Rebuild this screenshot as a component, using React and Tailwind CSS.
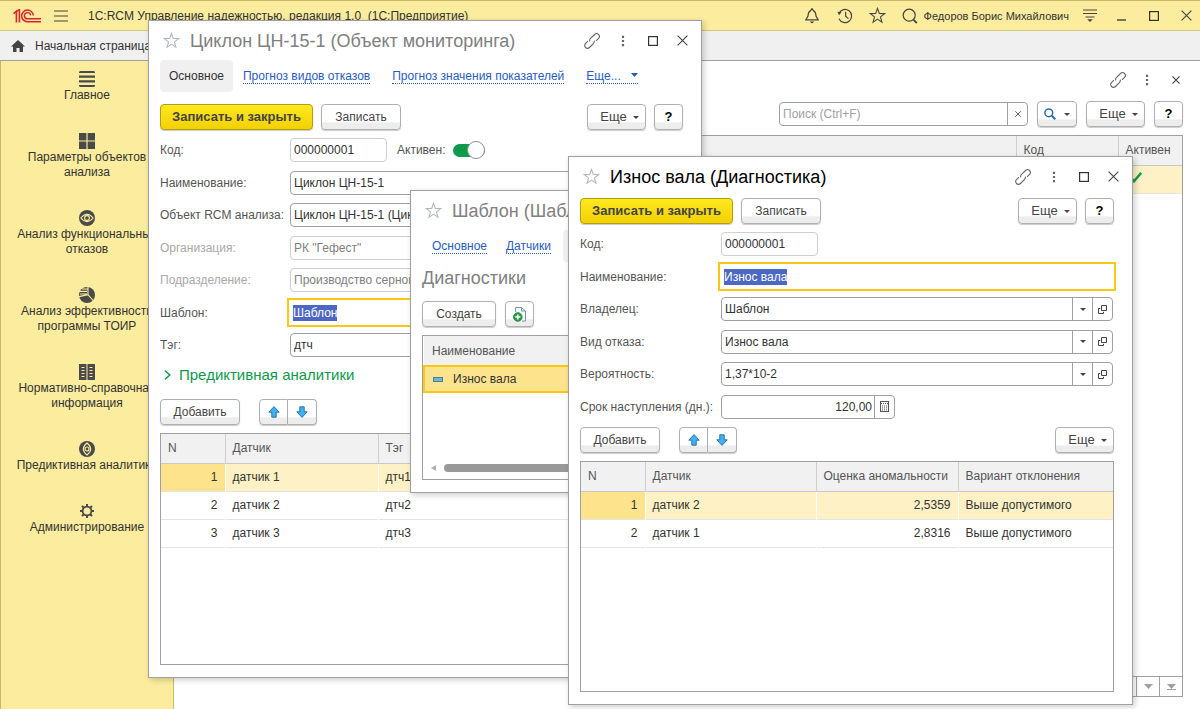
import React from 'react'
import clsx from 'clsx'

const sections = [
  { label: 'Главное', icon: 'lines' },
  { label: 'Параметры объектов анализа', icon: 'grid' },
  { label: 'Анализ функциональных отказов', icon: 'eye' },
  { label: 'Анализ эффективности программы ТОИР', icon: 'pie' },
  { label: 'Нормативно-справочная информация', icon: 'book' },
  { label: 'Предиктивная аналитика', icon: 'target' },
  { label: 'Администрирование', icon: 'gear' },
]

const sensors = [
  ['1', 'датчик 1', 'дтч1'],
  ['2', 'датчик 2', 'дтч2'],
  ['3', 'датчик 3', 'дтч3'],
]

const deviations = [
  ['1', 'датчик 2', '2,5359', 'Выше допустимого'],
  ['2', 'датчик 1', '2,8316', 'Выше допустимого'],
]

/* ---------- icons ---------- */

function Logo() {
  return (
    <svg width="28" height="14" viewBox="0 0 28 14" fill="none" stroke="#d9232e">
      <path d="M0.6 4.6L3.4 2.2V13.6M3.4 2.2L6.4 0.8V13.6" strokeWidth="1.6" />
      <path d="M20.3 6.4A5.8 5.8 0 1 0 14.6 12.7H28" strokeWidth="1.5" />
      <path d="M17.6 6.4A3.1 3.1 0 1 0 14.6 9.8H28" strokeWidth="1.4" />
    </svg>
  )
}

function SectionIcon({ name }) {
  return (
    <svg width="16" height="16" viewBox="0 0 16 16" fill="#4a4a4a">
      {name === 'lines' && <path d="M1 0h14l1 1v1H0V1zM0 4.6h16v2.2H0zM0 9.2h16v2.2H0zM0 14h16v1l-1 1H1l-1-1z" />}
      {name === 'grid' && <path d="M0 0h7.4v7.4H0zM8.6 0H16v7.4H8.6zM0 8.6h7.4V16H0zM8.6 8.6H16V16H8.6z" />}
      {name === 'eye' && (
        <>
          <circle cx="8" cy="8" r="8" />
          <path d="M1.8 8Q8 0.8 14.2 8Q8 15.2 1.8 8z" fill="none" stroke="#fbec9e" strokeWidth="1.1" />
          <circle cx="8" cy="8" r="2.4" fill="none" stroke="#fbec9e" strokeWidth="1.1" />
        </>
      )}
      {name === 'pie' && (
        <>
          <circle cx="8" cy="8" r="8" />
          <path d="M9 7.6V0M9 7.6L14.5 14M9 7.6L0 9.6M0 4.4h8M1 7h7M3 2h5.5" fill="none" stroke="#fbec9e" strokeWidth="1.1" />
        </>
      )}
      {name === 'book' && (
        <>
          <path d="M0 0h7.5v16H0zM8.5 0H16v16H8.5z" />
          <path d="M2.5 3.5h3M2.5 6.5h3M2.5 9.5h3M2.5 12.5h3M10.5 3.5h3M10.5 6.5h3M10.5 9.5h3M10.5 12.5h3" stroke="#fbec9e" strokeWidth="1" />
        </>
      )}
      {name === 'target' && (
        <>
          <circle cx="8" cy="8" r="8" />
          <path d="M8 2Q15.4 8 8 14Q0.6 8 8 2z" fill="none" stroke="#fbec9e" strokeWidth="1.1" />
          <circle cx="8" cy="8" r="2" fill="none" stroke="#fbec9e" strokeWidth="1.2" />
        </>
      )}
      {name === 'gear' && (
        <g fill="none" stroke="#4a4a4a">
          <circle cx="8" cy="8" r="4.4" strokeWidth="1.8" />
          <path d="M8 1v2.6M8 12.4V15M1 8h2.6M12.4 8H15M3 3l2 2M11 11l2 2M13 3l-2 2M5 11l-2 2" strokeWidth="2" />
        </g>
      )}
    </svg>
  )
}

function Star({ size = 17, color = '#b3b7bd' }) {
  return (
    <svg width={size} height={size} viewBox="0 0 17 17" fill="none" stroke={color} strokeWidth="1.1">
      <path d="M8.5 1.4L10.3 6.4L15.7 6.6L11.5 9.9L12.9 15.1L8.5 12.1L4.1 15.1L5.5 9.9L1.3 6.6L6.7 6.4z" />
    </svg>
  )
}

function LinkIcon() {
  return (
    <svg width="16" height="16" viewBox="0 0 16 16" fill="none" stroke="#666" strokeWidth="1.1">
      <g transform="rotate(-45 8 8)">
        <path d="M6.2 6.6A2.8 2.8 0 0 1 8.8 5.2H14.4A2.8 2.8 0 0 1 14.4 10.8H11" />
        <path d="M9.8 9.4A2.8 2.8 0 0 1 7.2 10.8H1.6A2.8 2.8 0 0 1 1.6 5.2H5" />
      </g>
    </svg>
  )
}

function Dots() {
  return (
    <svg width="4" height="12" viewBox="0 0 4 12" fill="#666">
      <path d="M0.9 0.8h2.2V3H0.9zM0.9 4.9h2.2v2.2H0.9zM0.9 9h2.2v2.2H0.9z" />
    </svg>
  )
}

function Square() {
  return (
    <svg width="10" height="10" viewBox="0 0 10 10" fill="none" stroke="#333" strokeWidth="1.2">
      <rect x="0.6" y="0.6" width="8.8" height="8.8" />
    </svg>
  )
}

function Cross({ size = 11 }) {
  return (
    <svg width={size} height={size} viewBox="0 0 11 11" fill="none" stroke="#444" strokeWidth={size < 10 ? 1.6 : 1.1}>
      <path d="M0.6 0.6L10.4 10.4M10.4 0.6L0.6 10.4" />
    </svg>
  )
}

function Caret() {
  return (
    <svg width="6" height="3" viewBox="0 0 6 3" fill="#444">
      <path d="M0 0h6L3 3z" />
    </svg>
  )
}

function Arrow({ down }) {
  return (
    <svg width="12" height="12" viewBox="0 0 12 12" fill="#45b0ee" stroke="#2277b0" strokeWidth="1">
      {down ? <path d="M3.8 0.8h4.4v5h3L6 11.4L0.8 5.8h3z" /> : <path d="M6 0.6L11.2 6.2h-3v5H3.8v-5h-3z" />}
    </svg>
  )
}

/* ---------- controls ---------- */

function Button({ children, primary, large, className, ...props }) {
  return (
    <button
      type="button"
      className={clsx(
        'flex h-[26px] shrink-0 items-center justify-center rounded-sm border text-[#444] shadow-[0_1px_1px_rgba(0,0,0,0.2)]',
        primary || large ? 'text-[13px]' : 'text-[12px]',
        primary
          ? 'border-[#b59c10] bg-linear-to-b from-[#ffe81f] to-[#f2d100] font-bold'
          : 'border-[#b0b0b0] bg-linear-to-b from-white from-70% to-[#ededed] to-75%',
        className
      )}
      {...props}
    >
      {children}
    </button>
  )
}

function MoreButton() {
  return (
    <Button large className="w-[59px] gap-1.5 pl-1.5">
      Еще <Caret />
    </Button>
  )
}

function HelpButton() {
  return <Button large className="w-[29px] font-bold text-black">?</Button>
}

function MoveButtons() {
  return (
    <div className="flex">
      <Button className="w-[29px] rounded-r-none" aria-label="Вверх"><Arrow /></Button>
      <Button className="w-[29px] rounded-l-none border-l-0" aria-label="Вниз"><Arrow down /></Button>
    </div>
  )
}

function Field({ id, label, value, labelWidth, muted, light, active, lookup, calc, width = 'flex-1', extra }) {
  return (
    <div className="flex h-6 items-center">
      <label htmlFor={id} className={clsx('shrink-0', labelWidth, muted ? 'text-[#a8a8a8]' : 'text-[#555]')}>{label}</label>
      <div
        className={clsx(
          'flex min-w-0 items-center overflow-hidden bg-white',
          width,
          active ? '-mx-[3px] h-[29px] border-2 border-[#fac814] px-1' : 'h-6 rounded border',
          !active && (muted || light ? 'border-[#cfcfcf]' : 'border-[#a0a0a0]'),
        )}
      >
        <input
          id={id}
          defaultValue={value}
          disabled={muted}
          className={clsx(
            'h-4 min-w-0 outline-none',
            active ? 'field-sizing-content bg-[#4d68c4] text-white' : 'flex-1 px-[3px]',
            !active && (muted ? 'text-[#808080]' : 'text-[#333]'),
            calc && 'pr-0.5 text-right'
          )}
        />
        {lookup && (
          <>
            <button type="button" aria-label="Выбрать" className="flex h-full w-5 items-center justify-center border-l border-[#a0a0a0]"><Caret /></button>
            <button type="button" aria-label="Открыть" className="flex h-full w-5 items-center justify-center border-l border-[#a0a0a0]">
              <svg width="9" height="9" viewBox="0 0 9 9" fill="none" stroke="#444"><path d="M3.5 0.5h5v5h-5zM2.3 3.5H0.5v5h5V6.8" /></svg>
            </button>
          </>
        )}
        {calc && (
          <button type="button" aria-label="Калькулятор" className="flex h-full w-5 items-center justify-center border-l border-[#a0a0a0]">
            <svg width="9" height="11" viewBox="0 0 9 11" fill="none" stroke="#555">
              <rect x="0.5" y="0.5" width="8" height="10" />
              <path d="M1 2.5h7M2 4.9h5M2 6.9h5M2 8.9h5" strokeDasharray="1 1" />
            </svg>
          </button>
        )}
      </div>
      {extra}
    </div>
  )
}

function Window({ title, muted, className, children }) {
  return (
    <section className={clsx('absolute flex flex-col border border-[#a0a0a0] bg-white px-[11px] pb-3 shadow-[2px_2px_6px_rgba(0,0,0,0.2)]', className)}>
      <header className="flex h-[39px] shrink-0 items-center pr-0.5 pl-[3px]">
        <Star />
        <h2 className={clsx('ml-2.5 flex-1 text-[18px] leading-6 whitespace-nowrap', muted ? 'text-[#808080]' : 'text-black')}>{title}</h2>
        <button type="button" aria-label="Ссылка"><LinkIcon /></button>
        <button type="button" aria-label="Меню" className="ml-[21px]"><Dots /></button>
        <button type="button" aria-label="Развернуть" className="ml-[23px]"><Square /></button>
        <button type="button" aria-label="Закрыть" className="ml-[19px]"><Cross /></button>
      </header>
      {children}
    </section>
  )
}

function Table({ columns, rows }) {
  return (
    <div className="flex-1 border border-[#a0a0a0]">
      <table className="w-full table-fixed border-collapse text-[#333]">
        <colgroup>
          {columns.map((c) => <col key={c.title} className={c.width} />)}
        </colgroup>
        <thead>
          <tr className="h-[29px] border-b border-[#c8c8c8] bg-[#f1f1f1]">
            {columns.map((c, i) => (
              <th key={c.title} className={clsx('px-[7px] text-left font-normal text-[#555]', i > 0 && 'border-l border-[#cfcfcf]')}>{c.title}</th>
            ))}
          </tr>
        </thead>
        <tbody>
          {rows.map((row, r) => (
            <tr key={row[0]} className={clsx('h-7 border-b border-[#e4e4e4]', r === 0 && 'bg-[#fdf1c5]')}>
              {row.map((cell, i) => (
                <td
                  key={i}
                  className={clsx(
                    'px-[7px]',
                    columns[i].right && 'text-right',
                    i > 0 && 'border-l border-white',
                    r === 0 && i === 0 && 'bg-[#fde38c]'
                  )}
                >
                  {cell}
                </td>
              ))}
            </tr>
          ))}
        </tbody>
      </table>
    </div>
  )
}

function NavLink({ children }) {
  return <a href="#" className="border-b border-dotted border-[#2a5cc0] leading-[14px] text-[#2a5cc0]">{children}</a>
}

/* ---------- application frame ---------- */

function TopBar() {
  return (
    <header className="flex h-[31px] shrink-0 items-center border-y border-t-[#c9b76c] border-b-[#d6c67c] bg-[#fbec9e] pr-2 pl-[13px] text-[#333]">
      <Logo />
      <button type="button" aria-label="Главное меню" className="ml-[13px]">
        <svg width="14" height="12" viewBox="0 0 14 12" stroke="#444" strokeWidth="1.2"><path d="M0 1h14M0 6h14M0 11h14" /></svg>
      </button>
      <h1 className="ml-5 flex-1 whitespace-pre">1C:RCM Управление надежностью, редакция 1.0  (1С:Предприятие)</h1>
      <button type="button" aria-label="Оповещения">
        <svg width="14" height="16" viewBox="0 0 14 16" fill="none" stroke="#444" strokeWidth="1.2">
          <path d="M7 0.6L8.4 2.6Q11 4 11 8L13.2 11.9H0.8L3 8Q3 4 5.6 2.6z" /><path d="M4.6 13.6h4.8L7 15.6z" fill="#444" stroke="none" />
        </svg>
      </button>
      <button type="button" aria-label="История" className="ml-[18px]">
        <svg width="16" height="16" viewBox="0 0 16 16" fill="none" stroke="#444" strokeWidth="1.2">
          <path d="M2 5.2A6.6 6.6 0 1 1 2 10.8M8.6 3.8V8.2L11.4 10.6" /><path d="M0.4 3.8L4.6 4.2L2 7.2z" fill="#444" stroke="none" />
        </svg>
      </button>
      <button type="button" aria-label="Избранное" className="ml-4"><Star size={17} color="#444" /></button>
      <button type="button" aria-label="Поиск" className="ml-4">
        <svg width="16" height="16" viewBox="0 0 16 16" fill="none" stroke="#444" strokeWidth="1.2">
          <circle cx="7.2" cy="7.2" r="6" /><path d="M11.2 11.4L14.8 15" strokeWidth="1.8" />
        </svg>
      </button>
      <span className="ml-1.5 text-[11px]">Федоров Борис Михайлович</span>
      <button type="button" aria-label="Настройки" className="ml-3.5">
        <svg width="14" height="13" viewBox="0 0 14 13" stroke="#444" strokeWidth="1.2">
          <path d="M0 1h14M0 4.5h14M2.5 8h9" /><path d="M4.2 10.2h5.6L7 13z" fill="#444" stroke="none" />
        </svg>
      </button>
      <button type="button" aria-label="Свернуть" className="ml-5">
        <svg width="9" height="10" viewBox="0 0 9 10" stroke="#333" strokeWidth="1.3"><path d="M0 9h9" /></svg>
      </button>
      <button type="button" aria-label="Развернуть" className="ml-[23px]"><Square /></button>
      <button type="button" aria-label="Закрыть" className="ml-[22px]"><Cross /></button>
    </header>
  )
}

function Sidebar() {
  return (
    <nav className="flex w-[174px] shrink-0 flex-col gap-[30px] border-r border-l border-[#c9b76c] bg-[#fbec9e] pt-[10px] leading-[15px] text-[#333]">
      {sections.map((s) => (
        <a key={s.label} href="#" className="flex flex-col items-center gap-px text-center">
          <SectionIcon name={s.icon} />
          <span className="px-2">{s.label}</span>
        </a>
      ))}
    </nav>
  )
}

function ScrollButton({ label, path }) {
  return (
    <button type="button" aria-label={label} className="flex w-[23px] items-center justify-center border-l border-[#a0a0a0]">
      <svg width="9" height="6" viewBox="0 0 9 6" fill="#a0a0a0"><path d={path} /></svg>
    </button>
  )
}

function ObjectList() {
  return (
    <main className="flex min-w-0 flex-1 flex-col pr-[17px] pb-3 pl-3">
      <div className="flex h-[38px] shrink-0 items-center justify-end pr-[3px]">
        <button type="button" aria-label="Ссылка"><LinkIcon /></button>
        <button type="button" aria-label="Меню" className="ml-[19px]"><Dots /></button>
        <button type="button" aria-label="Закрыть" className="ml-[23px]"><Cross size={8} /></button>
      </div>
      <div className="flex items-center justify-end gap-[9px] pt-0.5">
        <div className="flex h-6 w-[249px] rounded border border-[#a0a0a0]">
          <input aria-label="Поиск" placeholder="Поиск (Ctrl+F)" className="min-w-0 flex-1 px-[3px] outline-none placeholder:text-[#a0a0a0]" />
          <button type="button" aria-label="Очистить" className="flex w-5 items-center justify-center border-l border-[#a0a0a0]"><Cross size={6} /></button>
        </div>
        <Button className="w-10 gap-2" aria-label="Найти">
          <svg width="12" height="12" viewBox="0 0 12 12" fill="none" stroke="#2a6ea6"><circle cx="4.8" cy="4.8" r="3.9" strokeWidth="1.5" /><path d="M7.8 7.8L11.3 11.3" strokeWidth="2" /></svg>
          <Caret />
        </Button>
        <MoreButton />
        <HelpButton />
      </div>
      <div className="mt-2 flex-1 border border-[#a0a0a0]">
        <table className="w-full table-fixed border-collapse">
          <colgroup>
            <col />
            <col className="w-[102px]" />
            <col className="w-[64px]" />
          </colgroup>
          <thead>
            <tr className="h-[29px] border-b border-[#c8c8c8] bg-[#f1f1f1] text-[#555]">
              <th className="px-2 text-left font-normal">Наименование</th>
              <th className="border-l border-[#cfcfcf] px-[7px] text-left font-normal">Код</th>
              <th className="border-l border-[#cfcfcf] px-[7px] text-left font-normal">Активен</th>
            </tr>
          </thead>
          <tbody>
            <tr className="h-7 border-b border-[#e4e4e4] bg-[#fdf1c5]">
              <td className="px-2">Циклон ЦН-15-1</td>
              <td className="px-[7px]">000000001</td>
              <td className="px-3 pb-1">
                <svg className="block" width="12" height="11" viewBox="0 0 12 11" fill="none" stroke="#0d9a4a" strokeWidth="2.4"><path d="M0.8 5.5L4 9.3L11.2 0.8" /></svg>
              </td>
            </tr>
          </tbody>
        </table>
      </div>
      <div className="flex h-5 shrink-0 self-end border-r border-b border-[#a0a0a0]">
        <ScrollButton label="В начало" path="M0 6h9L4.5 1zM0 0h9v1H0z" />
        <ScrollButton label="Выше" path="M0 5h9L4.5 0z" />
        <ScrollButton label="Ниже" path="M0 0h9L4.5 5z" />
        <ScrollButton label="В конец" path="M0 0h9L4.5 5zM0 5h9v1H0z" />
      </div>
    </main>
  )
}

/* ---------- windows ---------- */

function ObjectWindow() {
  return (
    <Window title="Циклон ЦН-15-1 (Объект мониторинга)" muted className="top-5 left-[148px] h-[658px] w-[554px]">
      <nav className="flex h-8 shrink-0 items-center gap-[22px]">
        <a href="#" className="-mr-3 flex h-full items-center rounded bg-[#f0f0f0] px-[9px] text-[#333]">Основное</a>
        <NavLink>Прогноз видов отказов</NavLink>
        <NavLink>Прогноз значения показателей</NavLink>
        <NavLink>
          Еще...
          <svg className="mb-0.5 ml-2.5 inline" width="7" height="4" viewBox="0 0 7 4" fill="#2a5cc0"><path d="M0 0h7L3.5 4z" /></svg>
        </NavLink>
      </nav>
      <div className="flex items-center gap-2 pt-3 pr-[7px]">
        <Button primary className="w-[153px]">Записать и закрыть</Button>
        <Button className="mr-auto w-20">Записать</Button>
        <MoreButton />
        <HelpButton />
      </div>
      <form className="mt-2 grid h-[219px] shrink-0 content-between">
        <Field
          id="obj-code" label="Код:" value="000000001" labelWidth="w-[130px]" light width="w-[97px]"
          extra={
            <label className="ml-2.5 flex items-center gap-2 text-[#555]">
              Активен:
              <input type="checkbox" role="switch" defaultChecked className="peer sr-only" />
              <span className="flex h-[13px] w-8 items-center justify-end rounded-full bg-[#0d9a4a]">
                <span className="size-[18px] shrink-0 rounded-full border border-[#909090] bg-white" />
              </span>
            </label>
          }
        />
        <Field id="obj-name" label="Наименование:" value="Циклон ЦН-15-1" labelWidth="w-[130px]" />
        <Field id="obj-rcm" label="Объект RCM анализа:" value="Циклон ЦН-15-1 (Циклон)" labelWidth="w-[130px]" />
        <Field id="obj-org" label="Организация:" value={'РК "Гефест"'} labelWidth="w-[130px]" muted />
        <Field id="obj-dep" label="Подразделение:" value="Производство серной кислоты" labelWidth="w-[130px]" muted />
        <Field id="obj-tpl" label="Шаблон:" value="Шаблон" labelWidth="w-[130px]" active />
        <Field id="obj-tag" label="Тэг:" value="дтч" labelWidth="w-[130px]" />
      </form>
      <button type="button" className="mt-2 flex h-5 items-center gap-2 self-start pl-1 text-[15px] text-[#0d9a4a]">
        <svg width="7" height="10" viewBox="0 0 7 10" fill="none" stroke="#0d9a4a" strokeWidth="1.5"><path d="M1 0.7L5.8 5L1 9.3" /></svg>
        Предиктивная аналитики
      </button>
      <div className="mt-3.5 mb-2 flex gap-[19px]">
        <Button className="w-20">Добавить</Button>
        <MoveButtons />
      </div>
      <Table
        columns={[
          { title: 'N', width: 'w-[64px]', right: true },
          { title: 'Датчик', width: 'w-[153px]' },
          { title: 'Тэг' },
        ]}
        rows={sensors}
      />
    </Window>
  )
}

function TemplateWindow() {
  return (
    <Window title="Шаблон (Шаблон)" muted className="top-[190px] left-[410px] h-[303px] w-[480px]">
      <nav className="flex h-8 shrink-0 items-center gap-[19px] pl-[10px]">
        <NavLink>Основное</NavLink>
        <NavLink>Датчики</NavLink>
        <a href="#" className="-ml-[7px] flex h-full items-center rounded bg-[#f0f0f0] px-[9px] text-[#333]">Диагностики</a>
      </nav>
      <h3 className="mt-1.5 h-5 text-[18px] leading-5 text-[#808080]">Диагностики</h3>
      <div className="mt-[13px] flex gap-[9px]">
        <Button className="w-[74px]">Создать</Button>
        <Button className="w-[29px]" aria-label="Создать копированием">
          <svg width="14" height="15" viewBox="0 0 14 15" fill="none">
            <path d="M2.5 5V0.5h6l4 3.5v10H9" fill="#f4f8fb" stroke="#7c97a8" /><path d="M8.5 0.5V4h4" stroke="#7c97a8" />
            <circle cx="4.8" cy="10" r="4.3" fill="#2a9e46" stroke="#1b7a33" strokeWidth="0.8" />
            <path d="M4.8 7.4v5.2M2.2 10h5.2" stroke="#fff" strokeWidth="1.5" />
          </svg>
        </Button>
      </div>
      <div className="mt-2 flex flex-1 flex-col border border-[#a0a0a0]">
        <table className="w-full border-collapse text-[#333]">
          <thead>
            <tr className="h-[30px] border-b border-[#c8c8c8] bg-[#f1f1f1]">
              <th className="px-2 text-left font-normal text-[#555]">Наименование</th>
            </tr>
          </thead>
          <tbody>
            <tr>
              <td className="h-[26px] border-2 border-[#fac814] bg-[#fde38c] px-2">
                <span className="flex items-center gap-2.5">
                  <span className="h-[5px] w-2.5 border border-[#4a7d9c] bg-[#7ab4d4]" />
                  Износ вала
                </span>
              </td>
            </tr>
          </tbody>
        </table>
        <div className="mt-auto flex h-[22px] items-center gap-2 pl-2">
          <svg width="5" height="6" viewBox="0 0 5 6" fill="#b0b0b0"><path d="M5 0v6L0 3z" /></svg>
          <div className="h-2 flex-1 rounded-full bg-[#999]" />
        </div>
      </div>
    </Window>
  )
}

function DiagnosticWindow() {
  return (
    <Window title="Износ вала (Диагностика)" className="top-[156px] left-[568px] h-[549px] w-[565px]">
      <div className="flex items-center gap-2 pt-0.5 pr-[7px]">
        <Button primary className="w-[153px]">Записать и закрыть</Button>
        <Button className="mr-auto w-20">Записать</Button>
        <MoreButton />
        <HelpButton />
      </div>
      <form className="mt-2 grid h-[187px] shrink-0 content-between pr-2">
        <Field id="dia-code" label="Код:" value="000000001" labelWidth="w-[141px]" light width="w-[97px]" />
        <Field id="dia-name" label="Наименование:" value="Износ вала" labelWidth="w-[141px]" active />
        <Field id="dia-owner" label="Владелец:" value="Шаблон" labelWidth="w-[141px]" lookup />
        <Field id="dia-kind" label="Вид отказа:" value="Износ вала" labelWidth="w-[141px]" lookup />
        <Field id="dia-prob" label="Вероятность:" value="1,37*10-2" labelWidth="w-[141px]" lookup />
        <Field id="dia-term" label="Срок наступления (дн.):" value="120,00" labelWidth="w-[141px]" width="w-[174px]" calc />
      </form>
      <div className="mt-2 mb-2 flex gap-[19px] pr-[7px]">
        <Button className="w-20">Добавить</Button>
        <MoveButtons />
        <div className="ml-auto"><MoreButton /></div>
      </div>
      <div className="flex flex-1 pr-[7px]">
        <Table
          columns={[
            { title: 'N', width: 'w-[64px]', right: true },
            { title: 'Датчик', width: 'w-[171px]' },
            { title: 'Оценка аномальности', width: 'w-[142px]', right: true },
            { title: 'Вариант отклонения' },
          ]}
          rows={deviations}
        />
      </div>
    </Window>
  )
}

export default function App() {
  return (
    <div className="relative flex h-screen flex-col overflow-hidden bg-white font-['Liberation_Sans',Arial,sans-serif] text-[12px] leading-4 text-[#333]">
      <TopBar />
      <div className="flex h-[30px] shrink-0 items-center gap-2.5 border-b border-[#a0a0a0] bg-[#f0f0f0] pl-[11px]">
        <svg width="14" height="12" viewBox="0 0 14 12" fill="#444"><path d="M7 0L14 6.5H12V12H8.5V8h-3v4H2V6.5H0z" /></svg>
        Начальная страница
      </div>
      <div className="flex min-h-0 flex-1">
        <Sidebar />
        <ObjectList />
      </div>
      <ObjectWindow />
      <TemplateWindow />
      <DiagnosticWindow />
    </div>
  )
}
